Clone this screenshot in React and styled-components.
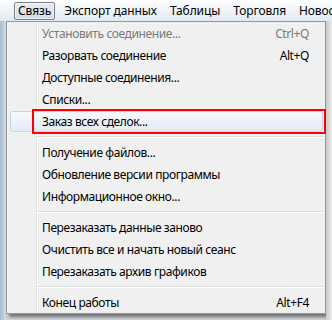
import React from "react";
import styled, { createGlobalStyle, css } from "styled-components";

const GlobalStyle = createGlobalStyle`
  body {
    margin: 0;
    background: #ffffff;
    font-family: "Noto Sans", "Open Sans", "DejaVu Sans", sans-serif;
    font-size: 12px;
    letter-spacing: -0.4px;
    color: #000000;
  }
`;

const Page = styled.div`
  width: 332px;
  height: 320px;
  overflow: hidden;
  display: flex;
  flex-direction: column;
`;

const MenuBar = styled.div`
  height: 21px;
  flex-shrink: 0;
  display: flex;
  align-items: center;
  gap: 5px;
  padding-left: 14px;
  background: linear-gradient(#fdfeff, #e3e9f2);
  white-space: nowrap;
  overflow: hidden;
  letter-spacing: -0.1px;
`;

const BarItem = styled.div`
  height: 16px;
  line-height: 16px;
  padding: 0 3px;
  border: 1px solid transparent;
  border-radius: 2px;
  ${(props) =>
    props.active &&
    css`
      border-color: #7b7f86;
      background: linear-gradient(#e8ecf1, #d5dbe3);
      box-shadow: inset 0 0 0 1px rgba(255, 255, 255, 0.5);
    `}
`;

const Body = styled.div`
  flex: 1;
  display: flex;
  background: #cfd2d6;
`;

const WindowFrame = styled.div`
  width: 6px;
  flex-shrink: 0;
  background: linear-gradient(to right, #a9bbd0, #cfdbe8);
`;

const Dropdown = styled.div`
  width: 320px;
  flex-shrink: 0;
  align-self: flex-start;
  box-sizing: border-box;
  border: 1px solid #979797;
  background: linear-gradient(
        to right,
        transparent 29px,
        #e2e3e3 29px,
        #e2e3e3 30px,
        #ffffff 30px,
        #ffffff 31px,
        transparent 31px
      ),
    #f0f0f0;
  box-shadow: 3px 3px 3px rgba(0, 0, 0, 0.45);
`;

const Item = styled.div`
  position: relative;
  height: 22px;
  display: flex;
  align-items: center;
  justify-content: space-between;
  padding: 0 16px 0 35px;
  white-space: nowrap;
  color: ${(props) => (props.disabled ? "#7a7a7a" : "#000000")};

  ${(props) =>
    props.selected &&
    css`
      &::before {
        content: "";
        position: absolute;
        top: 1px;
        bottom: 0;
        left: 3px;
        right: 2px;
        border: 1px solid #c3d5ea;
        border-radius: 3px;
        background: linear-gradient(#f7f9fd, #e2eaf6);
      }
    `}

  ${(props) =>
    props.marked &&
    css`
      &::after {
        content: "";
        position: absolute;
        top: -1px;
        bottom: -2px;
        left: 25px;
        right: -1px;
        border: 2px solid #ff0000;
      }
    `}
`;

const Label = styled.span`
  position: relative;
`;

const Shortcut = styled.span`
  position: relative;
`;

const Separator = styled.div`
  height: 1px;
  margin: 4px 2px 3px 30px;
  background: #e0e0e0;
  border-bottom: 1px solid #ffffff;
`;

const Behind = styled.div`
  flex: 1;
  background: linear-gradient(to right, #c9c9c9, #ececec);
`;

const barItems = ["Связь", "Экспорт данных", "Таблицы", "Торговля", "Новости"];

const menu = [
  { label: "Установить соединение...", shortcut: "Ctrl+Q", disabled: true },
  { label: "Разорвать соединение", shortcut: "Alt+Q" },
  { label: "Доступные соединения..." },
  { label: "Списки..." },
  { label: "Заказ всех сделок...", selected: true, marked: true },
  "sep",
  { label: "Получение файлов..." },
  { label: "Обновление версии программы" },
  { label: "Информационное окно..." },
  "sep",
  { label: "Перезаказать данные заново" },
  { label: "Очистить все и начать новый сеанс" },
  { label: "Перезаказать архив графиков" },
  "sep",
  { label: "Конец работы", shortcut: "Alt+F4" },
];

const App = () => {
  return (
    <>
      <GlobalStyle />
      <Page>
        <MenuBar>
          {barItems.map((name, i) => (
            <BarItem key={name} active={i === 0}>
              {name}
            </BarItem>
          ))}
        </MenuBar>
        <Body>
          <WindowFrame />
          <Dropdown>
            {menu.map((el, i) =>
              el === "sep" ? (
                <Separator key={i} />
              ) : (
                <Item
                  key={i}
                  disabled={el.disabled}
                  selected={el.selected}
                  marked={el.marked}
                >
                  <Label>{el.label}</Label>
                  {el.shortcut && <Shortcut>{el.shortcut}</Shortcut>}
                </Item>
              )
            )}
          </Dropdown>
          <Behind />
        </Body>
      </Page>
    </>
  );
};

export default App;
